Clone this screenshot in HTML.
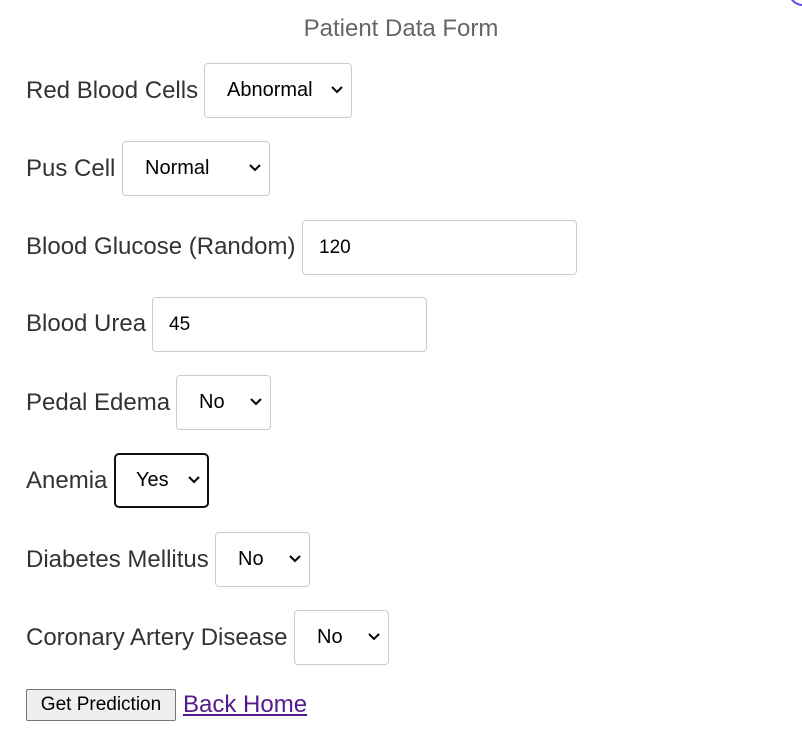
<!DOCTYPE html>
<html><head><style>
body{margin:0;width:802px;height:746px;background:#fff;font-family:"Liberation Sans",Arial,sans-serif;position:relative;overflow:hidden}
.t{position:absolute;left:0;width:802px;text-align:center;top:15px;font-size:24px;color:#666}
.l{position:absolute;left:26px;font-size:24px;color:#333;line-height:28px}
.s{position:absolute;box-sizing:border-box;border:1px solid #ccc;border-radius:4px;height:55px;font-size:20px;color:#000;line-height:53px;padding-left:22px}
.s svg{position:absolute;right:8px;top:22px}
.a{border:2px solid #111;border-radius:5px;padding-left:20px;line-height:51px}
.btn{position:absolute;left:26px;top:689px;width:150px;height:32px;box-sizing:border-box;border:1px solid #767676;border-radius:2px;background:#efefef;font-size:19px;text-align:center;line-height:30px;color:#000}
.lk{position:absolute;left:183px;top:691px;font-size:24px;color:#551a8b;text-decoration:underline}
.cx{position:absolute;top:-24px;right:-16px;width:26px;height:26px;border:2px solid #5a4be0;border-radius:50%}
</style></head><body>
<div class="cx"></div>
<div class="t">Patient Data Form</div>
<div class="l" style="top:77px">Red Blood Cells</div>
<div class="s" style="left:204px;top:63px;width:148px">Abnormal<svg width="12" height="8"><path d="M1 1l5 5 5-5" fill="none" stroke="#000" stroke-width="2"/></svg></div>
<div class="l" style="top:155px">Pus Cell</div>
<div class="s" style="left:122px;top:141px;width:148px">Normal<svg width="12" height="8"><path d="M1 1l5 5 5-5" fill="none" stroke="#000" stroke-width="2"/></svg></div>
<div class="l" style="top:233px">Blood Glucose (Random)</div>
<div class="s" style="left:302px;top:220px;width:275px;height:55px;padding-left:16px;font-size:19px">120</div>
<div class="l" style="top:310px">Blood Urea</div>
<div class="s" style="left:152px;top:297px;width:275px;padding-left:16px;font-size:19px">45</div>
<div class="l" style="top:389px">Pedal Edema</div>
<div class="s" style="left:176px;top:375px;width:95px">No<svg width="12" height="8"><path d="M1 1l5 5 5-5" fill="none" stroke="#000" stroke-width="2"/></svg></div>
<div class="l" style="top:467px">Anemia</div>
<div class="s a" style="left:114px;top:453px;width:95px">Yes<svg width="12" height="8" style="right:7px;top:21px"><path d="M1 1l5 5 5-5" fill="none" stroke="#000" stroke-width="2"/></svg></div>
<div class="l" style="top:546px">Diabetes Mellitus</div>
<div class="s" style="left:215px;top:532px;width:95px">No<svg width="12" height="8"><path d="M1 1l5 5 5-5" fill="none" stroke="#000" stroke-width="2"/></svg></div>
<div class="l" style="top:624px">Coronary Artery Disease</div>
<div class="s" style="left:294px;top:610px;width:95px">No<svg width="12" height="8"><path d="M1 1l5 5 5-5" fill="none" stroke="#000" stroke-width="2"/></svg></div>
<div class="btn">Get Prediction</div>
<div class="lk">Back Home</div>
</body></html>
